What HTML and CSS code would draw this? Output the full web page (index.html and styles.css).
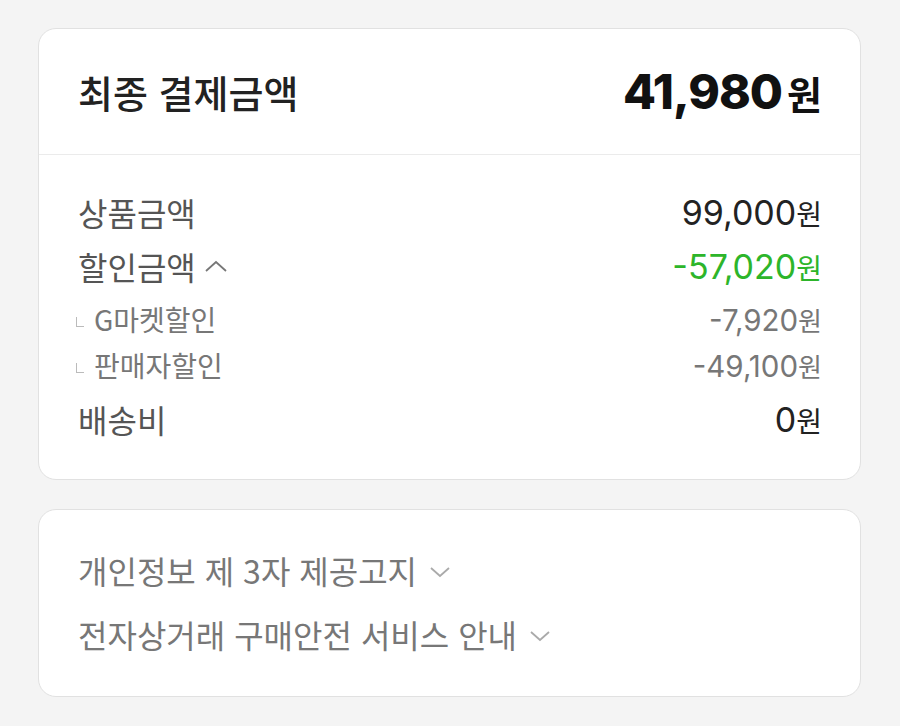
FILE: index.html
```html
<!DOCTYPE html>
<html lang="ko">
<head>
  <meta charset="UTF-8">
  <meta name="viewport" content="width=device-width, initial-scale=1.0">
  <title>최종 결제금액</title>
  <link rel="stylesheet" href="styles.css">
</head>
<body>
  <div class="page">
    <section class="card summary">
      <div class="summary-head">
        <h2 class="summary-title">최종 결제금액</h2>
        <div class="total"><span class="num">41,980</span><span class="won">원</span></div>
      </div>
      <div class="summary-body">
        <div class="row">
          <span class="label">상품금액</span>
          <span class="value"><span class="num">99,000</span><span class="won">원</span></span>
        </div>
        <div class="row">
          <span class="label">할인금액
            <svg class="chev" width="24" height="14" viewBox="0 0 24 14"><path d="M2 12 L12 3 L22 12" fill="none" stroke="#777" stroke-width="1.8"/></svg>
          </span>
          <span class="value discount"><span class="num">-57,020</span><span class="won">원</span></span>
        </div>
        <div class="sub-group">
          <div class="row sub">
            <span class="label"><span class="corner"></span>G마켓할인</span>
            <span class="value"><span class="num">-7,920</span><span class="won">원</span></span>
          </div>
          <div class="row sub">
            <span class="label"><span class="corner"></span>판매자할인</span>
            <span class="value"><span class="num">-49,100</span><span class="won">원</span></span>
          </div>
        </div>
        <div class="row">
          <span class="label">배송비</span>
          <span class="value"><span class="num">0</span><span class="won">원</span></span>
        </div>
      </div>
    </section>

    <section class="card notices">
      <div class="notice">개인정보 제 3자 제공고지
        <svg class="chev" width="22" height="12" viewBox="0 0 22 12"><path d="M2 2 L11 10 L20 2" fill="none" stroke="#aaa" stroke-width="1.8"/></svg>
      </div>
      <div class="notice">전자상거래 구매안전 서비스 안내
        <svg class="chev" width="22" height="12" viewBox="0 0 22 12"><path d="M2 2 L11 10 L20 2" fill="none" stroke="#aaa" stroke-width="1.8"/></svg>
      </div>
    </section>
  </div>
</body>
</html>
```

FILE: styles.css
```css
body {
  margin: 0;
  background: #f4f4f4;
  font-family: "Noto Sans CJK KR", "Noto Sans", sans-serif;
  color: #222;
}

.page {
  padding: 28px 39px 0 38px;
  display: flex;
  flex-direction: column;
  gap: 29px;
}

.card {
  background: #fff;
  border: 1px solid #e1e1e1;
  border-radius: 18px;
}

.num {
  font-family: "Inter", "Noto Sans", sans-serif;
}

/* summary */
.summary-head {
  height: 125px;
  padding: 0 38px 0 39px;
  display: flex;
  align-items: center;
  justify-content: space-between;
  border-bottom: 1px solid #ebebeb;
}

.summary-title {
  margin: 0;
  font-size: 38px;
  font-weight: 500;
  color: #222;
}

.total {
  color: #111;
  display: flex;
  align-items: baseline;
}

.total .num {
  font-size: 48px;
  font-weight: 800;
  letter-spacing: -1px;
}

.total .won {
  font-size: 38px;
  font-weight: 700;
  margin-left: 5px;
}

.summary-body {
  padding: 30px 38px 33px 39px;
}

.row {
  height: 54px;
  display: flex;
  align-items: center;
  justify-content: space-between;
  font-size: 32px;
}

.row .label {
  color: #555;
  display: flex;
  align-items: center;
}

.row .value {
  color: #222;
  display: flex;
  align-items: baseline;
}

.row .value .num {
  font-size: 34px;
}

.row .value .won {
  font-size: 28px;
}

.chev {
  margin-left: 8px;
}

.discount {
  color: #2db52a !important;
}

.sub-group {
  padding: 3px 0 4px;
}

.row.sub {
  height: 46px;
  font-size: 28px;
}

.row.sub .label {
  color: #777;
}

.row.sub .value {
  color: #777;
}

.row.sub .value .num {
  font-size: 29.5px;
}

.row.sub .value .won {
  font-size: 26px;
}

.corner {
  width: 7px;
  height: 9px;
  border-left: 1px solid #bbb;
  border-bottom: 1px solid #bbb;
  margin: 6px 10px 0 -2px;
}

/* notices */
.notices {
  padding: 28px 39px 30px;
}

.notice {
  height: 64px;
  display: flex;
  align-items: center;
  font-size: 32px;
  color: #777;
}

.notice .chev {
  margin-left: 12px;
  margin-top: 4px;
}
```
